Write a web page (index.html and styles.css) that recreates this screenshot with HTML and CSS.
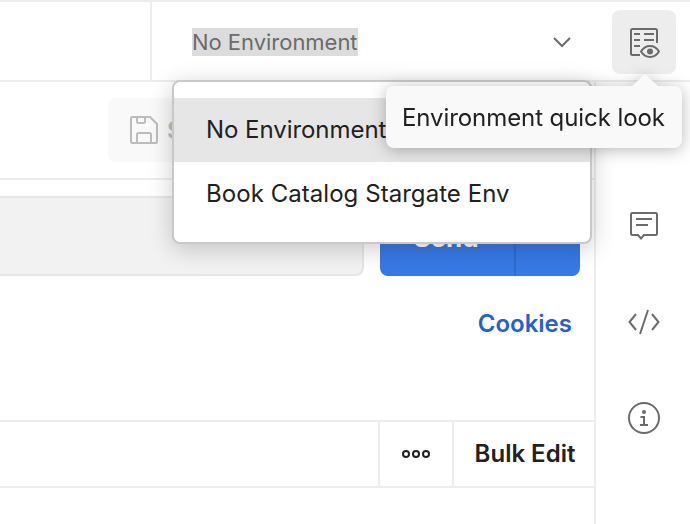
FILE: index.html
```html
<!DOCTYPE html>
<html lang="en">
<head>
<meta charset="utf-8">
<title>Request</title>
<link rel="stylesheet" href="styles.css">
</head>
<body>
<div class="app">
  <header class="topbar">
    <div class="tabs"></div>
    <div class="env-select">
      <span class="env-value">No Environment</span>
      <svg class="chevron" width="20" height="12" viewBox="0 0 20 12"><path d="M2 2l8 8 8-8"/></svg>
    </div>
    <button class="quick-look" aria-label="Environment quick look">
      <svg class="icon" width="32" height="32" viewBox="0 0 32 32"><path d="M12 29H4.500Q3 29 3 27.500V4.500Q3 3 4.500 3H27.500Q29 3 29 4.500V17M6 8h6M16 8h10M6 14h6M16 14h10M6 20h6"/><path d="M13 25.500Q16.500 20 22 20T31 25.500Q27.500 31 22 31T13 25.500Z"/><circle class="solid" cx="22" cy="25.500" r="3"/></svg>
    </button>
    <div class="menu">
      <div class="option active">No Environment</div>
      <div class="option">Book Catalog Stargate Env</div>
    </div>
    <div class="tooltip">Environment quick look</div>
  </header>
  <div class="body">
    <main class="main">
      <section class="toolbar">
        <button class="save"><svg width="28" height="28" viewBox="0 0 28 28"><path d="M2.500 1H20L27 8V25.500Q27 27 25.500 27H2.500Q1 27 1 25.500V2.500Q1 1 2.500 1ZM7 1V5.500Q7 7 8.500 7H13.500Q15 7 15 5.500V1M7 27V18.500Q7 17 8.500 17H19.500Q21 17 21 18.500V27"/></svg><span>Save</span></button>
      </section>
      <section class="request">
        <div class="url"></div>
        <div class="send"><span class="send-label">Send</span><span class="send-more"></span></div>
      </section>
      <section class="links"><a class="cookies">Cookies</a></section>
      <section class="params">
        <div class="cell"></div>
        <div class="cell more"><svg width="30" height="10" viewBox="0 0 30 10"><circle cx="5" cy="5" r="3"/><circle cx="15" cy="5" r="3"/><circle cx="25" cy="5" r="3"/></svg></div>
        <div class="cell bulk">Bulk Edit</div>
      </section>
    </main>
    <aside class="rail">
      <svg class="icon" width="32" height="32" viewBox="0 0 32 32"><path d="M4.500 3H27.500Q29 3 29 4.500V23.500Q29 25 27.500 25H16L13 28.500L10 25H4.500Q3 25 3 23.500V4.500Q3 3 4.500 3ZM8 9H24M8 15H20"/></svg>
      <svg class="icon" width="32" height="32" viewBox="0 0 32 32"><path d="M8 8L1.500 16L8 24M24 8L30.500 16L24 24M20 4L12 28"/></svg>
      <svg class="icon" width="32" height="32" viewBox="0 0 32 32"><circle cx="16" cy="16" r="15"/><path d="M12.500 15H16V23M12 23H20"/><circle class="solid" cx="16" cy="10" r="2"/></svg>
    </aside>
  </div>
</div>
</body>
</html>
```
FILE: styles.css
```css
* { box-sizing: border-box; }
body { margin: 0; overflow: hidden; background: #fff; color: #212121; font-family: Inter, sans-serif; font-size: 24px; }
button { border: 0; padding: 0; font: inherit; }
svg { display: block; flex: none; fill: none; stroke-width: 2; }
.app { width: 690px; height: 524px; display: flex; flex-direction: column; overflow: hidden; }
.topbar { position: relative; z-index: 2; display: flex; height: 82px; flex: none; border-top: 2px solid #ededed; border-bottom: 2px solid #ededed; }
.tabs { width: 152px; border-right: 2px solid #ededed; }
.env-select { width: 460px; display: flex; align-items: center; justify-content: space-between; padding: 2px 40px 0; }
.env-value { height: 28px; line-height: 28px; width: 166px; white-space: nowrap; background: #dcdcdc; color: #6b6b6b; font-size: 22px; letter-spacing: -.03px; }
.chevron { stroke: #6b6b6b; }
.quick-look { width: 64px; height: 64px; margin-top: 8px; display: grid; place-items: center; background: #ededed; border-radius: 8px; }
.icon { stroke: #6b6b6b; }
.solid { fill: #6b6b6b; stroke: none; }
.menu { position: absolute; left: 172px; top: 78px; width: 420px; height: 164px; padding: 16px 0; background: #fff; border: 2px solid #c8c8c8; border-radius: 8px; box-shadow: 0 5px 24px rgba(0,0,0,.2); }
.option { height: 64px; line-height: 64px; padding-left: 32px; white-space: nowrap; letter-spacing: .05px; }
.active { background: #e6e6e6; letter-spacing: -.05px; }
.tooltip { position: absolute; left: 386px; top: 84px; width: 296px; height: 62px; line-height: 64px; padding-left: 16px; white-space: nowrap; letter-spacing: -.08px; background: #f9f9f9; border-radius: 8px; filter: drop-shadow(0 2px 8px rgba(0,0,0,.28)); }
.tooltip::before { content: ""; position: absolute; left: 246px; top: -12px; border: 13px solid transparent; border-top: 0; border-bottom: 12px solid #f9f9f9; }
.body { display: flex; flex: 1; min-height: 0; }
.main { width: 596px; border-right: 2px solid #ededed; display: flex; flex-direction: column; }
.toolbar { height: 98px; flex: none; padding: 16px 0 0 108px; border-bottom: 2px solid #ededed; }
.save { width: 128px; height: 64px; padding-left: 22px; display: flex; align-items: center; gap: 9px; background: #f9f9f9; color: #bcbcbc; border-radius: 8px; font-weight: 600; }
.save svg { stroke: #bcbcbc; }
.request { display: flex; gap: 16px; height: 96px; padding-top: 16px; flex: none; }
.url { width: 364px; background: #f2f2f2; border: 2px solid #e6e6e6; border-left: 0; border-radius: 0 8px 8px 0; }
.send { width: 200px; display: flex; background: #3779e5; color: #fff; border-radius: 8px; overflow: hidden; font-weight: 700; font-size: 26px; }
.send-label { width: 136px; line-height: 83px; padding-right: 2px; text-align: center; border-right: 2px solid #2d6cd2; }
.links { height: 144px; flex: none; padding: 32px 22px 0 0; text-align: right; line-height: 32px; }
.cookies { color: #265fd1; font-weight: 600; }
.params { height: 68px; flex: none; display: flex; border-top: 2px solid #ededed; border-bottom: 2px solid #ededed; }
.cell { width: 380px; display: flex; align-items: center; justify-content: center; border-right: 2px solid #ededed; }
.more { width: 74px; stroke: #212121; }
.bulk { width: 140px; padding: 0 0 2px 2px; border: 0; flex: none; font-weight: 600; white-space: nowrap; }
.rail { width: 94px; padding: 128px 0 0 2px; display: flex; flex-direction: column; align-items: center; gap: 64px; }
```
